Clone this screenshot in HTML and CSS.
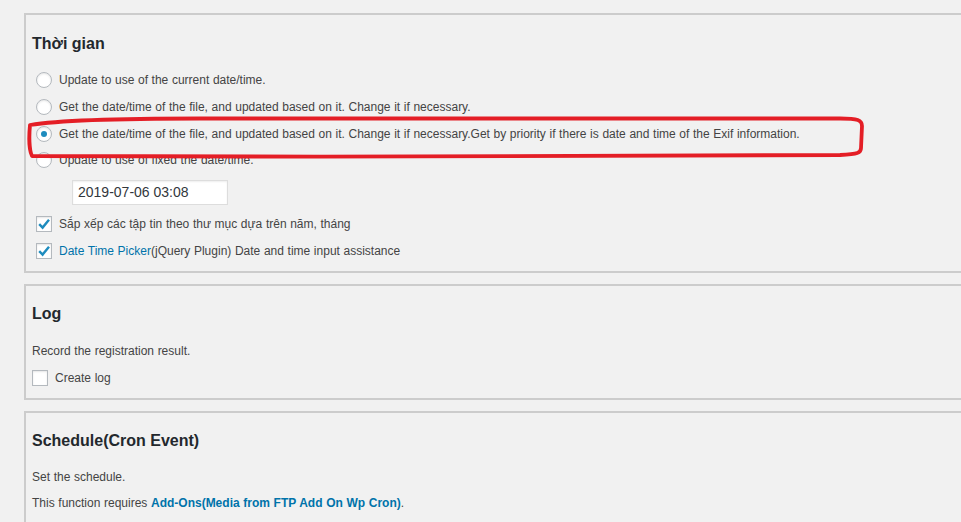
FILE: index.html
```html
<!DOCTYPE html>
<html>
<head>
<meta charset="utf-8">
<link rel="stylesheet" href="styles.css">
</head>
<body>
<div class="page">
  <section class="panel panel-time">
    <h2 class="title">Thời gian</h2>
    <div class="row opt"><span class="radio"></span><span>Update to use of the current date/time.</span></div>
    <div class="row opt"><span class="radio"></span><span>Get the date/time of the file, and updated based on it. Change it if necessary.</span></div>
    <div class="row opt"><span class="radio checked"></span><span>Get the date/time of the file, and updated based on it. Change it if necessary.Get by priority if there is date and time of the Exif information.</span></div>
    <div class="row opt"><span class="radio"></span><span>Update to use of fixed the date/time.</span></div>
    <div class="row input-row"><span class="date-input">2019-07-06 03:08</span></div>
    <div class="row opt"><span class="check checked"><svg viewBox="0 0 16 16" width="16" height="16"><path d="M3.2 8.2 L6.6 11.6 L13 3.8" fill="none" stroke="#1e8cbe" stroke-width="2.4"/></svg></span><span>Sắp xếp các tập tin theo thư mục dựa trên năm, tháng</span></div>
    <div class="row opt"><span class="check checked"><svg viewBox="0 0 16 16" width="16" height="16"><path d="M3.2 8.2 L6.6 11.6 L13 3.8" fill="none" stroke="#1e8cbe" stroke-width="2.4"/></svg></span><span><span class="link">Date Time Picker</span>(jQuery Plugin) Date and time input assistance</span></div>
    <svg class="annotation" width="850" height="50" viewBox="0 0 850 50">
      <path d="M4 10 C 34 5, 94 3.5, 174 3.5 L 814 3.5 C 832 3.5, 836 5, 836 11 L 835 33 C 835 38, 832 39, 814 40 C 574 42, 274 42, 6 41 C 3 35, 3 20, 4 10 Z" fill="none" stroke="#e41e26" stroke-width="3.8" stroke-linejoin="round"/>
    </svg>
  </section>

  <section class="panel panel-log">
    <h2 class="title">Log</h2>
    <p class="line">Record the registration result.</p>
    <div class="row opt flush"><span class="check"></span><span>Create log</span></div>
  </section>

  <section class="panel panel-cron">
    <h2 class="title">Schedule(Cron Event)</h2>
    <p class="line">Set the schedule.</p>
    <p class="line">This function requires <span class="link bold">Add-Ons(Media from FTP Add On Wp Cron)</span>.</p>
  </section>
</div>
</body>
</html>
```
FILE: styles.css
```css
html, body {
  margin: 0;
  padding: 0;
  background: #f1f1f1;
  overflow: hidden;
}
body {
  font-family: "Liberation Sans", Arial, sans-serif;
  font-size: 12px;
  color: #444;
  word-spacing: 0.3px;
}
.page {
  padding-top: 13px;
  padding-left: 24px;
  display: flex;
  flex-direction: column;
  gap: 11px;
}
.panel {
  position: relative;
  border: 2px solid #ccc;
  margin-right: -40px;
  padding-left: 6px;
  display: flex;
  flex-direction: column;
}
.title {
  margin: 0;
  font-size: 16px;
  line-height: 20px;
  font-weight: bold;
  color: #23282d;
  word-spacing: 0;
}
.row {
  display: flex;
  align-items: center;
  height: 26.7px;
  white-space: nowrap;
}
.line {
  margin: 0;
  height: 26.7px;
  line-height: 26.7px;
  white-space: nowrap;
}
.opt {
  padding-left: 4px;
  gap: 7px;
}
.opt.flush {
  padding-left: 0;
  gap: 7px;
}
.radio {
  width: 14px;
  height: 14px;
  border: 1px solid #b4b9be;
  border-radius: 50%;
  background: #fff;
  box-shadow: inset 0 1px 2px rgba(0,0,0,0.1);
  display: flex;
  align-items: center;
  justify-content: center;
  flex: none;
}
.radio.checked::after {
  content: "";
  width: 6px;
  height: 6px;
  border-radius: 50%;
  background: #1e8cbe;
}
.check {
  width: 14px;
  height: 14px;
  border: 1px solid #b4b9be;
  background: #fff;
  box-shadow: inset 0 1px 2px rgba(0,0,0,0.1);
  flex: none;
  display: flex;
}
.check svg {
  margin: -1px;
}
.link {
  color: #0073aa;
}
.bold {
  font-weight: bold;
}
.panel-time {
  padding-top: 19px;
  padding-bottom: 7px;
}
.panel-time .title {
  margin-bottom: 13px;
}
.input-row {
  height: 24px;
  margin: 7px 0 6px 40px;
}
.date-input {
  box-sizing: border-box;
  width: 156px;
  height: 25px;
  background: #fff;
  border: 1px solid #ddd;
  box-shadow: inset 0 1px 2px rgba(0,0,0,0.07);
  font-size: 14px;
  color: #32373c;
  padding-left: 5px;
  line-height: 23px;
  word-spacing: 0;
}
.panel-log {
  padding-top: 18px;
  padding-bottom: 6px;
}
.panel-log .title {
  margin-bottom: 14px;
}
.panel-cron {
  padding-top: 18px;
  height: 130px;
}
.panel-cron .title {
  margin-bottom: 13px;
}
.annotation {
  position: absolute;
  left: 0;
  top: 100px;
}
```
